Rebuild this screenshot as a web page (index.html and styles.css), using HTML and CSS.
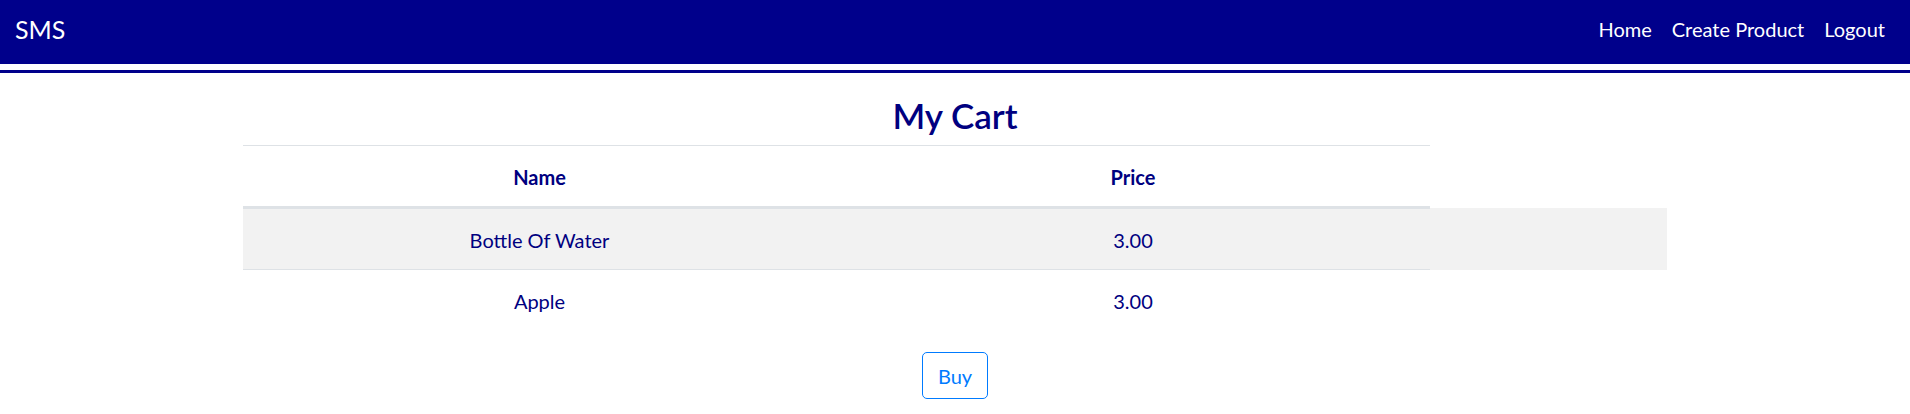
FILE: index.html
```html
<!DOCTYPE html>
<html lang="en">
<head>
<meta charset="utf-8">
<title>SMS - My Cart</title>
<link rel="stylesheet" href="styles.css">
</head>
<body>
<header class="navbar">
  <a class="brand" href="#">SMS</a>
  <nav class="nav">
    <a class="nav-link" href="#">Home</a>
    <a class="nav-link" href="#">Create Product</a>
    <a class="nav-link" href="#">Logout</a>
  </nav>
</header>
<div class="rule"></div>
<main class="content">
  <h3 class="title">My Cart</h3>
  <table class="cart">
    <colgroup>
      <col class="col-name">
      <col class="col-price">
      <col class="col-extra">
    </colgroup>
    <thead>
      <tr><th>Name</th><th>Price</th></tr>
    </thead>
    <tbody>
      <tr class="odd"><td>Bottle Of Water</td><td>3.00</td><td class="blank"></td></tr>
      <tr><td>Apple</td><td>3.00</td><td class="blank"></td></tr>
    </tbody>
  </table>
  <div class="actions">
    <button class="btn" type="button">Buy</button>
  </div>
</main>
</body>
</html>
```
FILE: styles.css
```css
html, body {
  margin: 0;
  padding: 0;
  background: #ffffff;
}

body {
  font-family: Lato, "Open Sans", sans-serif;
  color: #000080;
}

.navbar {
  box-sizing: border-box;
  height: 64px;
  background: #00008b;
  display: flex;
  align-items: flex-start;
  justify-content: space-between;
  padding: 14px 15px 0 15px;
}

.brand {
  color: #ffffff;
  text-decoration: none;
  font-size: 25px;
  line-height: 30px;
}

.nav {
  display: flex;
  align-items: baseline;
  margin-top: 2.5px;
}

.nav-link {
  color: #ffffff;
  text-decoration: none;
  font-size: 20px;
  line-height: 24px;
  padding: 0 10px;
}

.rule {
  height: 3px;
  margin-top: 6px;
  background: #00008b;
}

.content {
  display: flex;
  flex-direction: column;
  align-items: center;
}

.title {
  margin: 21px 0 9px 0;
  font-size: 35px;
  line-height: 42px;
  font-weight: 600;
  color: #000080;
}

.cart {
  width: 1424px;
  table-layout: fixed;
  border-collapse: collapse;
  font-size: 20px;
  line-height: 30px;
  color: #000080;
}

.col-name { width: 593px; }
.col-price { width: 594px; }
.col-extra { width: 237px; }

.cart th {
  padding: 16px 15px 14px 15px;
  text-align: center;
  font-weight: 700;
  border-top: 1px solid #dee2e6;
  border-bottom: 3px solid #dee2e6;
}

.cart td {
  padding: 16px 15px 14px 15px;
  text-align: center;
  border-top: 1px solid #dee2e6;
}

.cart td.blank {
  border: none;
}

.cart tr.odd {
  background: #f2f2f2;
}

.actions {
  margin-top: 22px;
  display: flex;
  justify-content: center;
}

.btn {
  box-sizing: border-box;
  height: 47px;
  padding: 0 15px;
  font-family: Lato, "Open Sans", sans-serif;
  font-size: 20px;
  line-height: 30px;
  color: #007bff;
  background: transparent;
  border: 1px solid #007bff;
  border-radius: 5px;
  cursor: pointer;
}
```
